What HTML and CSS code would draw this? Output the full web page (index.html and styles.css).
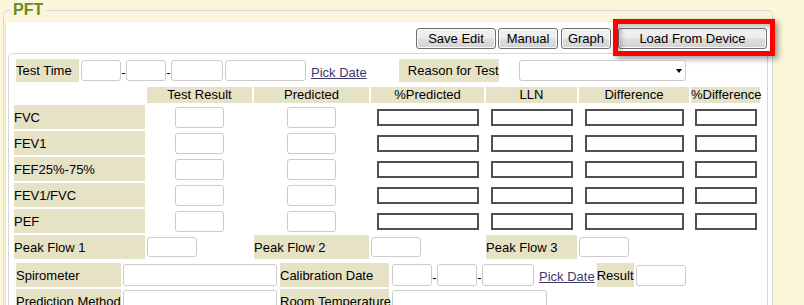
FILE: index.html
```html
<!DOCTYPE html>
<html>
<head>
<meta charset="utf-8">
<title>PFT</title>
<link rel="stylesheet" href="styles.css">
</head>
<body>
<fieldset class="pft">
  <legend class="pft-legend">PFT</legend>
  <div class="panel">
    <div class="toolbar">
      <button class="btn btn-save">Save Edit</button>
      <button class="btn btn-manual">Manual</button>
      <button class="btn btn-graph">Graph</button>
      <span class="hl-wrap"><button class="btn btn-load">Load From Device</button><span class="highlight"></span></span>
    </div>
    <div class="box">
      <div class="time-row">
        <span class="lbl lbl-time">Test Time</span>
        <input class="in w40 first"><span class="dash">-</span><input class="in w40"><span class="dash">-</span><input class="in w52"><input class="in w81 gap2">
        <a class="pick" href="#">Pick Date</a>
        <span class="lbl lbl-reason">Reason for Test</span>
        <span class="sel"><select class="sel-el"></select></span>
      </div>

      <div class="grid">
        <span class="blank"></span>
        <span class="hd">Test Result</span>
        <span class="hd">Predicted</span>
        <span class="hd">%Predicted</span>
        <span class="hd">LLN</span>
        <span class="hd">Difference</span>
        <span class="hd">%Difference</span>

        <span class="lbl">FVC</span>
        <span class="cell"><input class="in w49"></span>
        <span class="cell"><input class="in w49"></span>
        <span class="cell"><input class="dk w102"></span>
        <span class="cell"><input class="dk w82"></span>
        <span class="cell"><input class="dk w99"></span>
        <span class="cell"><input class="dk w62"></span>

        <span class="lbl">FEV1</span>
        <span class="cell"><input class="in w49"></span>
        <span class="cell"><input class="in w49"></span>
        <span class="cell"><input class="dk w102"></span>
        <span class="cell"><input class="dk w82"></span>
        <span class="cell"><input class="dk w99"></span>
        <span class="cell"><input class="dk w62"></span>

        <span class="lbl">FEF25%-75%</span>
        <span class="cell"><input class="in w49"></span>
        <span class="cell"><input class="in w49"></span>
        <span class="cell"><input class="dk w102"></span>
        <span class="cell"><input class="dk w82"></span>
        <span class="cell"><input class="dk w99"></span>
        <span class="cell"><input class="dk w62"></span>

        <span class="lbl">FEV1/FVC</span>
        <span class="cell"><input class="in w49"></span>
        <span class="cell"><input class="in w49"></span>
        <span class="cell"><input class="dk w102"></span>
        <span class="cell"><input class="dk w82"></span>
        <span class="cell"><input class="dk w99"></span>
        <span class="cell"><input class="dk w62"></span>

        <span class="lbl">PEF</span>
        <span class="cell"><input class="in w49"></span>
        <span class="cell"><input class="in w49"></span>
        <span class="cell"><input class="dk w102"></span>
        <span class="cell"><input class="dk w82"></span>
        <span class="cell"><input class="dk w99"></span>
        <span class="cell"><input class="dk w62"></span>

        <span class="lbl">Peak Flow 1</span>
        <span class="cell cell-left"><input class="in w50 h20"></span>
        <span class="lbl">Peak Flow 2</span>
        <span class="cell cell-left"><input class="in w50 h20"></span>
        <span class="lbl">Peak Flow 3</span>
        <span class="cell cell-left"><input class="in w50 h20"></span>
        <span class="blank"></span>
      </div>

      <div class="meta">
        <div class="meta-row">
          <span class="lbl lbl-meta">Spirometer</span>
          <input class="in h22 w154 gap2">
          <span class="lbl lbl-meta2">Calibration Date</span>
          <input class="in h22 w40 gap3"><span class="dash">-</span><input class="in h22 w40"><span class="dash">-</span><input class="in h22 w52">
          <a class="pick" href="#">Pick Date</a>
          <span class="lbl lbl-result">Result</span>
          <input class="in w50 gap2">
        </div>
        <div class="meta-row">
          <span class="lbl lbl-meta">Prediction Method</span>
          <input class="in h22 w154 gap2">
          <span class="lbl lbl-meta2">Room Temperature</span>
          <input class="in h22 w155 gap3">
        </div>
      </div>
    </div>
  </div>
</fieldset>
</body>
</html>
```

FILE: styles.css
```css
* {
  box-sizing: border-box;
}

html,
body {
  margin: 0;
  padding: 0;
  height: 305px;
  overflow: hidden;
}

body {
  background: #fbf5d9;
  font: 13px "Liberation Sans", Arial, sans-serif;
  color: #000;
}

.pft {
  margin: 1px 0 0 3px;
  width: 770px;
  min-width: 0;
  border: 1px solid #d2dae0;
  border-radius: 5px;
  padding: 3px 0 0 1px;
}

.pft-legend {
  margin-left: 5px;
  padding: 0 3px;
  font-weight: bold;
  font-size: 16px;
  line-height: 18px;
  color: #6b8a22;
}

.panel {
  background: #fff;
  border-left: 1px solid #dde3e7;
  padding: 6px 4px 0 2px;
  min-height: 380px;
}

/* toolbar */
.toolbar {
  display: flex;
  justify-content: flex-end;
  height: 21px;
  margin-right: 1px;
}

.btn {
  height: 21px;
  margin: 0;
  padding: 0;
  border: 1px solid #707070;
  border-radius: 3px;
  background: linear-gradient(#f3f3f3 0%, #ececec 45%, #dedede 55%, #d2d2d2 100%);
  box-shadow: inset 0 0 0 1px #fbfbfb;
  font: 13px "Liberation Sans", Arial, sans-serif;
  color: #000;
  line-height: 17px;
}

.btn-save { width: 80px; }
.btn-manual { width: 60px; margin-left: 2px; }
.btn-graph { width: 50px; margin-left: 3px; }
.btn-load { width: 149px; }

.hl-wrap {
  position: relative;
  display: flex;
  margin-left: 7px;
}

.highlight {
  position: absolute;
  left: -5px;
  top: -9px;
  right: -8px;
  bottom: -7px;
  border: 5px solid #ff0000;
  box-shadow: 3px 3px 6px rgba(0, 0, 0, 0.38), inset 3px 3px 5px rgba(0, 0, 0, 0.25);
  pointer-events: none;
}

/* inner box */
.box {
  margin-top: 4px;
  border: 1px solid #d6d6d6;
  border-bottom: 0;
  border-radius: 5px 5px 0 0;
  padding: 5px 7px 0 7px;
  min-height: 320px;
}

.lbl {
  display: flex;
  align-items: center;
  background: #e6e2c6;
  white-space: nowrap;
}

/* test time row */
.time-row {
  display: flex;
  align-items: center;
  height: 23px;
}

.time-row .lbl {
  height: 23px;
}

.lbl-time {
  width: 63px;
}

.lbl-reason {
  width: 100px;
  margin-left: 32px;
  justify-content: flex-end;
}

.in {
  height: 21px;
  margin: 0;
  padding: 0 2px;
  border: 1px solid #cbcbcb;
  border-radius: 3px;
  background: #fff;
  font: 13px "Liberation Sans", Arial, sans-serif;
}

.dk {
  height: 17px;
  margin: 0;
  padding: 0 2px;
  border: 2px solid #505050;
  background: #fff;
  font: 13px "Liberation Sans", Arial, sans-serif;
}

.first { margin-left: 2px; }
.gap2 { margin-left: 2px; }
.gap3 { margin-left: 3px; }

.h20 { height: 20px; }
.h22 { height: 22px; }

.w40 { width: 40px; }
.w49 { width: 49px; }
.w50 { width: 50px; }
.w52 { width: 52px; }
.w62 { width: 62px; }
.w81 { width: 81px; }
.w82 { width: 82px; }
.w99 { width: 99px; }
.w102 { width: 102px; }
.w154 { width: 154px; }
.w155 { width: 155px; }

.dash {
  align-self: flex-end;
  width: 5px;
  text-align: center;
  line-height: 15px;
  margin-bottom: 2px;
}

.pick {
  align-self: flex-end;
  margin-left: 5px;
  margin-bottom: 2px;
  line-height: 15px;
  color: #3b3b6d;
  text-decoration: underline;
  white-space: nowrap;
}

.sel {
  position: relative;
  margin-left: 20px;
  width: 167px;
  height: 21px;
  border: 1px solid #cacaca;
  border-radius: 3px;
  background: #fff;
}

.sel::after {
  content: "";
  position: absolute;
  right: 3px;
  top: 8px;
  border-left: 3.5px solid transparent;
  border-right: 3.5px solid transparent;
  border-top: 4px solid #000;
}

.sel-el {
  appearance: none;
  -webkit-appearance: none;
  width: 100%;
  height: 100%;
  border: 0;
  background: transparent;
  outline: none;
}

/* results grid */
.grid {
  display: grid;
  grid-template-columns: 131px 105px 115px 113px 91px 110px 69px;
  grid-template-rows: 16px repeat(6, 24px);
  gap: 2px;
  margin: 5px 0 0 -2px;
}

.hd {
  background: #e6e2c6;
  text-align: center;
  line-height: 16px;
  white-space: nowrap;
}

.cell {
  display: flex;
  align-items: center;
  justify-content: center;
}

.cell-left {
  justify-content: flex-start;
}

/* meta rows */
.meta {
  display: flex;
  flex-direction: column;
  gap: 2px;
  margin-top: 4px;
}

.meta-row {
  display: flex;
  align-items: center;
  height: 24px;
}

.meta-row .lbl {
  height: 24px;
}

.lbl-meta {
  width: 105px;
}

.lbl-meta2 {
  width: 109px;
  margin-left: 3px;
}

.lbl-result {
  width: 37px;
  margin-left: 2px;
}

.meta-row .pick {
  margin-bottom: 3px;
}
```
